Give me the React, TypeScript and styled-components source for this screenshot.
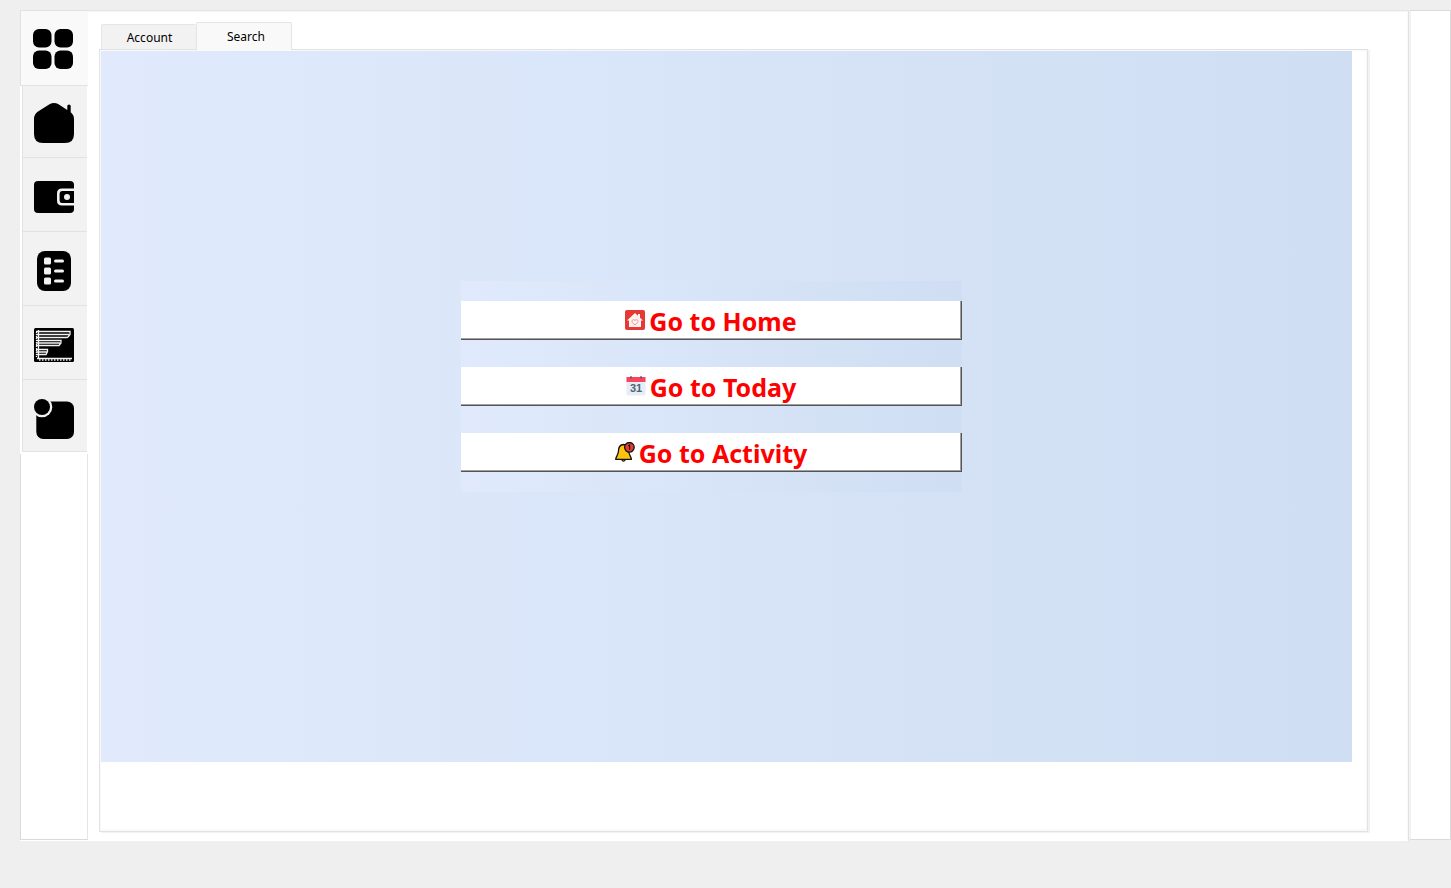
import React from 'react';
import styled, { createGlobalStyle, css } from 'styled-components';

const GlobalStyle = createGlobalStyle`
  *, *::before, *::after { box-sizing: border-box; }
  body {
    margin: 0;
    background: #efefef;
    color: #000;
    font: 12px/16px "Noto Sans", sans-serif;
  }
`;

const Window = styled.div`
  display: flex;
  min-height: 100vh;
  padding: 10px 0 47px 20px;
`;

const Sidebar = styled.nav`
  display: flex;
  flex-direction: column;
  flex: 0 0 68px;
  background: #fff;
`;

const SideTab = styled.button<{ $active?: boolean }>`
  display: flex;
  align-items: center;
  justify-content: center;
  height: 74px;
  margin: 0 1px 0 2px;
  padding: 4px 2px 0 0;
  border: 0 solid #e2e2e2;
  border-width: 0 0 1px 1px;
  background: #f2f2f2;
  ${(p) =>
    p.$active &&
    css`
      height: 76px;
      margin: 0;
      padding: 1px 3px 0 0;
      border-width: 1px 0 1px 1px;
      background: #f9f9f9;
    `}
  &:last-of-type { height: 72px; padding-top: 6px; }
  &:nth-of-type(2) { height: 72px; padding-top: 2px; }
  svg { display: block; }
`;

const SideBody = styled.div`
  flex: 1;
  margin: 2px 0 1px;
  border: solid #dadada;
  border-width: 0 0 1px 1px;
  border-right: 1px solid #e5e5e5;
`;

const Main = styled.main`
  display: flex;
  flex-direction: column;
  flex: 1;
  min-width: 0;
  padding: 11px 40px 9px 11px;
  border-top: 1px solid #e5e5e5;
  border-right: 1px solid #e2e2e2;
  box-shadow: inset 0 1px #f6f6f6, inset -1px 0 #fafafa;
  background: #fff;
`;

const TabBar = styled.div`
  display: flex;
  align-items: flex-end;
  height: 28px;
  margin-bottom: -1px;
  padding-left: 2px;
  position: relative;
`;

const Tab = styled.button<{ $active?: boolean }>`
  width: 95px;
  height: 25px;
  margin-bottom: 1px;
  padding: 1px 0 0 1px;
  border: 1px solid #e5e5e5;
  border-bottom: 0;
  border-right: 0;
  border-radius: 2px 2px 0 0;
  background: #f2f2f2;
  color: inherit;
  font: inherit;
  ${(p) =>
    p.$active &&
    css`
      width: 96px;
      height: 28px;
      margin-bottom: 0;
      padding: 0 0 0 4px;
      border-right: 1px solid #e5e5e5;
      background: #f9f9f9;
    `}
`;

const Pane = styled.section`
  flex: 1;
  padding: 1px 15px 69px 1px;
  border: 1px solid #e2e2e2;
  box-shadow: inset 1px 1px #f9f9f9, inset -1px -2px #f9f9f9, 2px 1px #f3f3f3;
  display: flex;
`;

const Canvas = styled.div`
  display: flex;
  flex: 1;
  align-items: center;
  justify-content: center;
  padding: 0 30px 40px 0;
  background: linear-gradient(to right, #e0eafc, #cfdef3);
`;

const Menu = styled.div`
  display: flex;
  flex-direction: column;
  gap: 27px;
  width: 41%;
  min-width: 300px;
  padding: 20px 0;
  background: linear-gradient(to right, #e0eafc, #cfdef3);
`;

const MenuButton = styled.button`
  display: flex;
  align-items: center;
  justify-content: center;
  gap: 4px;
  height: 39px;
  padding: 0;
  border: 0 solid #555;
  border-width: 0 1px 1px 0;
  box-shadow: inset -1px -1px #a0a0a0;
  background: #fff;
  color: #f00;
  font: bold 25px/36px "Noto Sans", sans-serif;
  svg { display: block; }
  span { padding-top: 2px; }
`;

const Dock = styled.aside`
  flex: 0 0 42px;
  margin-bottom: 1px;
  border: 1px solid #dadada;
  border-left: 2px solid #f2f2f2;
  background: #fff;
`;

const GridIcon = () => (
  <svg width="40" height="40" viewBox="0 0 40 40" aria-hidden="true">
    <rect width="18.5" height="18.5" rx="6" />
    <rect x="21.5" width="18.5" height="18.5" rx="6" />
    <rect y="21.5" width="18.5" height="18.5" rx="6" />
    <rect x="21.5" y="21.5" width="18.5" height="18.5" rx="6" />
  </svg>
);

const HomeIcon = () => (
  <svg width="40" height="40" viewBox="0 0 40 40" aria-hidden="true">
    <path d="M15.5 1.2Q20-1 24.5 1.2L33.3 7V3Q33.3 1.5 35 1.5T36.7 3V9.3Q40 12 40 16V31Q40 40 31 40H9Q0 40 0 31V16Q0 11 4 8.5Z" />
  </svg>
);

const WalletIcon = () => (
  <svg width="40" height="40" viewBox="0 0 40 40" aria-hidden="true">
    <rect y="4" width="40" height="32" rx="4" />
    <path d="M40 12.7H28Q24.3 12.7 24.3 16.5V23.5Q24.3 27.3 28 27.3H40" fill="none" stroke="#f2f2f2" strokeWidth="2.6" />
    <circle cx="33" cy="20" r="3" fill="#f2f2f2" />
  </svg>
);

const ListIcon = () => (
  <svg width="40" height="40" viewBox="0 0 40 40" aria-hidden="true">
    <rect x="3" width="34" height="40" rx="8" />
    {[6.5, 16.5, 26.5].map((y) => (
      <g key={y} fill="#f2f2f2">
        <rect x="10" y={y} width="7" height="7" rx="1.5" />
        <rect x="20" y={y + 2} width="10" height="3" rx="1.5" />
      </g>
    ))}
  </svg>
);

const ChartIcon = () => (
  <svg width="40" height="40" viewBox="0 0 40 40" aria-hidden="true">
    <rect y="3" width="40" height="34" rx="1.5" />
    <g fill="none" stroke="#f2f2f2" strokeWidth="1.3">
      <path d="M4.5 5V33M2 6.5H36V9.5L34.5 11.5L33 12.5H2M2 9.5H35M2 15.5H27V18L25 20.5H2M2 18H26M2 24.5H13.5V26.5L12 29.5H2M2 27H13" />
      <path d="M3 33.5H38" />
      <path d="M5 35H38" strokeDasharray="1.5 1.5" />
      <path d="M2.5 7V33" strokeDasharray="1 1" />
    </g>
  </svg>
);

const NoticeIcon = () => (
  <svg width="40" height="40" viewBox="0 0 40 40" aria-hidden="true">
    <rect x="2.3" y="2.5" width="37.7" height="37.5" rx="7" />
    <circle cx="8" cy="8" r="10.3" fill="#f2f2f2" />
    <circle cx="8" cy="8" r="8" />
  </svg>
);

const RedHouse = () => (
  <svg width="20" height="20" viewBox="0 0 20 20" aria-hidden="true">
    <rect width="20" height="20" rx="2" fill="#e53935" />
    <path d="M2 10.5L10 3L13 5.8V4H15V7.7L18 10.5H16V17H4V10.5Z" fill="#fff4f0" />
    <path d="M10 14.8C5 12 7 8.5 10 10.3C13 8.5 15 12 10 14.8Z" fill="none" stroke="#e77" strokeWidth=".8" />
  </svg>
);

const CalendarIcon = () => (
  <svg width="20" height="20" viewBox="0 0 20 20" aria-hidden="true">
    <rect x=".5" y="1" width="19" height="18.5" rx="1" fill="#e6edf7" />
    <path d="M.5 1H19.5V6H.5Z" fill="#f8455e" />
    <path d="M5 0V2.5M15 0V2.5" stroke="#4c5565" strokeWidth="1.2" />
    <text x="10" y="16" textAnchor="middle" fontFamily="Liberation Sans Narrow, Liberation Sans, sans-serif" fontSize="11" fontWeight="bold" fill="#526173">31</text>
  </svg>
);

const BellIcon = () => (
  <svg width="20" height="20" viewBox="0 0 20 20" aria-hidden="true">
    <path d="M6.5 17.5Q8.5 21 10.5 17.5" fill="#e39a12" stroke="#111" strokeWidth="1.2" />
    <path d="M8.5 2.5C4.5 2.8 3.5 6 3.5 9C3.5 13 .8 14.5.8 17.3H16.3C16.3 14.5 13.6 13 13.6 9C13.6 5.5 12 2.5 8.5 2.5Z" fill="#ffc20e" stroke="#111" strokeWidth="1.3" />
    <circle cx="14.4" cy="5.3" r="4.8" fill="#e53b35" stroke="#111" strokeWidth="1.3" />
    <path d="M13.3 3.7L14.6 3V7.8" fill="none" stroke="#111" strokeWidth="1.2" />
  </svg>
);

const sideTabs = [
  { label: 'Dashboard', Icon: GridIcon },
  { label: 'Home', Icon: HomeIcon },
  { label: 'Wallet', Icon: WalletIcon },
  { label: 'List', Icon: ListIcon },
  { label: 'Chart', Icon: ChartIcon },
  { label: 'Notifications', Icon: NoticeIcon },
];

const actions = [
  { label: 'Go to Home', Icon: RedHouse },
  { label: 'Go to Today', Icon: CalendarIcon },
  { label: 'Go to Activity', Icon: BellIcon },
];

export default function App() {
  return (
    <>
      <GlobalStyle />
      <Window>
        <Sidebar>
          {sideTabs.map(({ label, Icon }, i) => (
            <SideTab key={label} type="button" aria-label={label} $active={i === 0}>
              <Icon />
            </SideTab>
          ))}
          <SideBody />
        </Sidebar>
        <Main>
          <TabBar role="tablist">
            <Tab type="button" role="tab" aria-selected={false}>Account</Tab>
            <Tab type="button" role="tab" aria-selected $active>Search</Tab>
          </TabBar>
          <Pane>
            <Canvas>
              <Menu>
                {actions.map(({ label, Icon }) => (
                  <MenuButton key={label} type="button">
                    <Icon />
                    <span>{label}</span>
                  </MenuButton>
                ))}
              </Menu>
            </Canvas>
          </Pane>
        </Main>
        <Dock />
      </Window>
    </>
  );
}
